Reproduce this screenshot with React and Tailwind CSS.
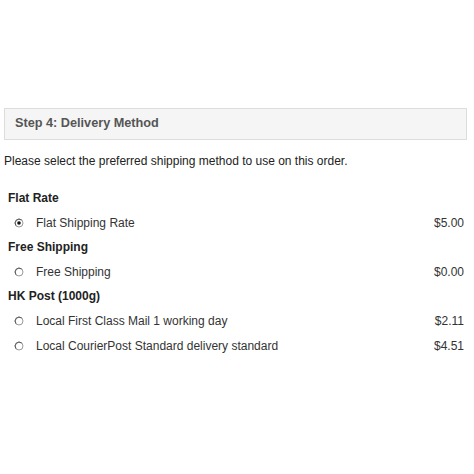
import React from "react";

function Radio({ checked }) {
  return (
    <svg width="10" height="10" viewBox="0 0 10 10" className="shrink-0">
      <circle cx="5" cy="5" r="4" fill="#fff" stroke="#9a9a9a" strokeWidth="1" />
      <path d="M2 7.6 A4 4 0 0 1 7.6 2" fill="none" stroke="#555" strokeWidth="1" />
      {checked && <circle cx="5" cy="5" r="1.8" fill="#111" />}
    </svg>
  );
}

function Heading({ children }) {
  return (
    <div className="h-[24px] flex items-center pl-[4px] font-bold text-[12px] text-[#222]">
      {children}
    </div>
  );
}

function Row({ label, price, checked }) {
  return (
    <div className="h-[25px] flex items-center text-[12px] text-[#333]">
      <div className="w-[32px] flex justify-start pl-[10px]">
        <Radio checked={checked} />
      </div>
      <div className="flex-1">{label}</div>
      <div className="pr-[6px]">{price}</div>
    </div>
  );
}

export default function App() {
  return (
    <div
      className="w-[474px] h-[474px] bg-white pt-[108px] px-[4px]"
      style={{ fontFamily: '"Liberation Sans", Arial, sans-serif' }}
    >
      <div className="w-[463px] h-[32px] bg-[#f5f5f5] border border-[#dddddd] flex items-center pl-[10px] text-[12.7px] font-bold text-[#555]">
        Step 4: Delivery Method
      </div>
      <p className="mt-[13px] leading-[16px] text-[12px] text-[#222]">
        Please select the preferred shipping method to use on this order.
      </p>
      <div className="mt-[17px]">
        <Heading>Flat Rate</Heading>
        <Row label="Flat Shipping Rate" price="$5.00" checked />
        <Heading>Free Shipping</Heading>
        <Row label="Free Shipping" price="$0.00" />
        <Heading>HK Post (1000g)</Heading>
        <Row label="Local First Class Mail 1 working day" price="$2.11" />
        <Row label="Local CourierPost Standard delivery standard" price="$4.51" />
      </div>
    </div>
  );
}
